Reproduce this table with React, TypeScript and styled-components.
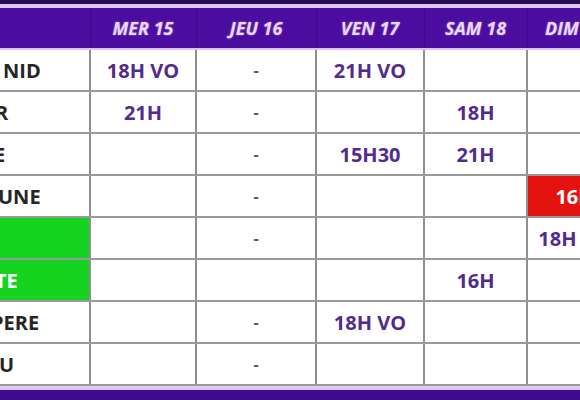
import React from "react";
import styled, { createGlobalStyle } from "styled-components";

const GlobalStyle = createGlobalStyle`
  html, body {
    margin: 0;
    padding: 0;
    background: #ffffff;
  }
`;

// Cadre de la page (capture 580x400)
const Frame = styled.div`
  width: 580px;
  height: 400px;
  overflow: hidden;
  background: #ffffff;
  font-family: "Open Sans", "Liberation Sans", sans-serif;
  display: flex;
  flex-direction: column;
`;

const TopBand = styled.div`
  height: 4px;
  flex: none;
  background: #24104d;
  border-bottom: 4px solid #dcc6f2;
`;

const BottomBand = styled.div`
  flex: 1;
  background: #3d0c8e;
  border-top: 4px solid #dcc6f2;
`;

const Table = styled.table`
  width: 621px;
  flex: none;
  border-collapse: collapse;
  table-layout: fixed;
`;

const HeadCell = styled.th`
  height: 40px;
  padding: 0;
  background: #4b0ca0;
  border-left: 1px solid #3c0788;
  border-bottom: 2px solid #d9c2f0;
  color: #ead8ff;
  font-size: 18px;
  font-weight: 700;
  font-style: italic;
  text-align: center;
  white-space: nowrap;
  text-shadow: 0 0 2px rgba(235, 215, 255, 0.55);

  &:first-child {
    border-left: none;
  }
`;

const Row = styled.tr`
  height: 42px;
`;

const NameCell = styled.td<{ $green?: boolean }>`
  padding: 0;
  overflow: hidden;
  white-space: nowrap;
  background: ${(p) => (p.$green ? "#14d420" : "#ffffff")};
  color: ${(p) => (p.$green ? "#ffffff" : "#262626")};
  font-size: 20px;
  font-weight: 700;
  text-align: left;
  border-right: 2px solid #8e8e8e;
  border-bottom: 2px solid #9a9a9a;
`;

const NameText = styled.span<{ $cut: number }>`
  display: inline-block;
  margin-left: ${(p) => p.$cut}px;
`;

const TimeCell = styled.td<{ $red?: boolean; $dash?: boolean }>`
  padding: 0;
  white-space: nowrap;
  overflow: hidden;
  text-align: center;
  font-size: ${(p) => (p.$dash ? "16px" : "20px")};
  font-weight: 700;
  background: ${(p) => (p.$red ? "#e4130f" : "#ffffff")};
  color: ${(p) => (p.$red ? "#ffffff" : p.$dash ? "#5a5a5a" : "#532b8d")};
  border-left: 2px solid #8e8e8e;
  border-bottom: 2px solid #9a9a9a;
`;

const days = ["", "MER 15", "JEU 16", "VEN 17", "SAM 18", "DIM 19"];
const widths = [90, 106, 120, 108, 103, 94];

type Film = {
  name: string;
  cut: number;
  green?: boolean;
  times: string[];
  red?: number;
};

const films: Film[] = [
  { name: "NID", cut: 3, times: ["18H VO", "-", "21H VO", "", ""] },
  { name: "R", cut: -5, times: ["21H", "-", "", "18H", ""] },
  { name: "E", cut: -6, times: ["", "-", "15H30", "21H", ""] },
  { name: "UNE", cut: -2, times: ["", "-", "", "", "16H"], red: 4 },
  { name: "", cut: 0, green: true, times: ["", "-", "", "", "18H VO"] },
  { name: "TE", cut: -5, green: true, times: ["", "", "", "16H", ""] },
  { name: "PERE", cut: -9, times: ["", "-", "18H VO", "", ""] },
  { name: "U", cut: -1, times: ["", "-", "", "", ""] },
];

const App: React.FC = () => {
  return (
    <Frame>
      <GlobalStyle />
      <TopBand />
      <Table>
        <colgroup>
          {widths.map((w, i) => (
            <col key={i} style={{ width: w }} />
          ))}
        </colgroup>
        <thead>
          <tr>
            {days.map((d, i) => (
              <HeadCell key={i}>{d}</HeadCell>
            ))}
          </tr>
        </thead>
        <tbody>
          {films.map((f, r) => (
            <Row key={r}>
              <NameCell $green={f.green}>
                <NameText $cut={f.cut}>{f.name}</NameText>
              </NameCell>
              {f.times.map((t, c) => (
                <TimeCell key={c} $red={f.red === c} $dash={t === "-"}>
                  {t}
                </TimeCell>
              ))}
            </Row>
          ))}
        </tbody>
      </Table>
      <BottomBand />
    </Frame>
  );
};

export default App;
